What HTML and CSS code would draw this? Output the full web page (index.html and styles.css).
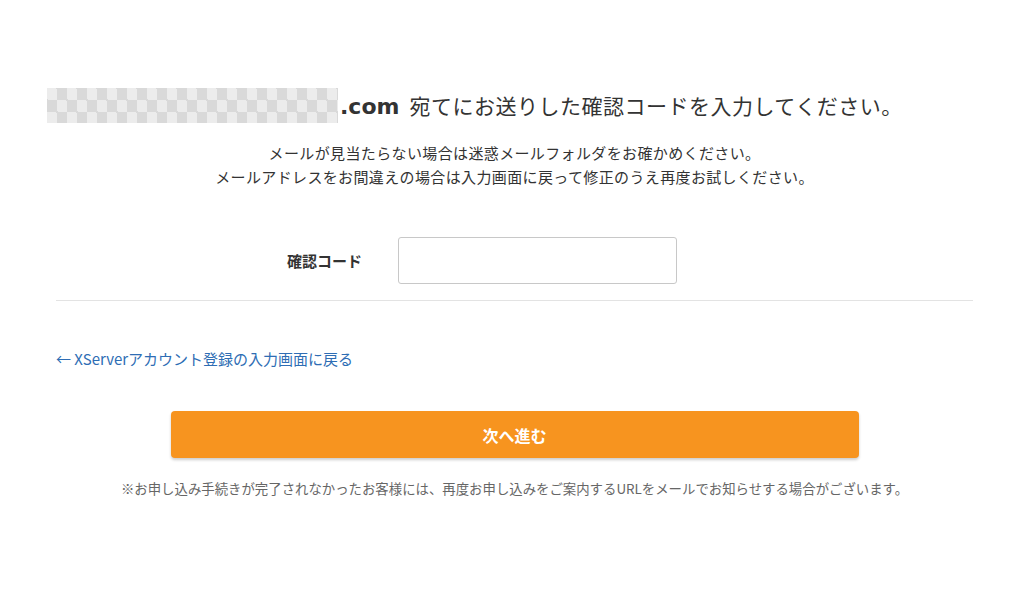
FILE: index.html
```html
<!DOCTYPE html>
<html lang="ja">
<head>
  <meta charset="UTF-8">
  <title>確認コードの入力</title>
  <link rel="stylesheet" href="styles.css">
</head>
<body>

  <h1 class="title">
    <span class="masked"></span>
    <span class="title-text"><span class="domain">.com</span>宛てにお送りした確認コードを入力してください。</span>
  </h1>

  <div class="container">
    <p class="lead">
      メールが見当たらない場合は迷惑メールフォルダをお確かめください。<br>
      メールアドレスをお間違えの場合は入力画面に戻って修正のうえ再度お試しください。
    </p>

    <form id="codeForm">
      <div class="form-row">
        <label for="code">確認コード</label>
        <input type="text" id="code">
      </div>

      <a class="back-link" href="#">← XServerアカウント登録の入力画面に戻る</a>

      <button type="submit" class="next-btn">次へ進む</button>
    </form>

    <p class="note">※お申し込み手続きが完了されなかったお客様には、再度お申し込みをご案内するURLをメールでお知らせする場合がございます。</p>
  </div>

</body>
</html>
```

FILE: styles.css
```css
body {
  margin: 0;
  font-family: "Noto Sans CJK JP", "Noto Sans", sans-serif;
  color: #333;
  background: #fff;
}
.title {
  display: flex;
  align-items: center;
  margin: 88px 0 0 47px;
  height: 35px;
  font-size: 21px;
  font-weight: normal;
  letter-spacing: 0.5px;
  white-space: nowrap;
}
.title-text {
  line-height: 35px;
}
.masked {
  display: inline-block;
  width: 291px;
  height: 35px;
  background-color: #ececec;
  background-image:
    linear-gradient(45deg, #d9d9d9 25%, transparent 25%, transparent 75%, #d9d9d9 75%),
    linear-gradient(45deg, #d9d9d9 25%, transparent 25%, transparent 75%, #d9d9d9 75%);
  background-size: 20px 24px;
  background-position: 0 0, 10px 12px;
}
.domain {
  font-family: "DejaVu Sans", sans-serif;
  font-size: 22px;
  font-weight: bold;
  letter-spacing: 0;
  margin: 0 10px 0 2px;
}
.container {
  width: 917px;
  margin-left: 56px;
}
.lead {
  margin: 18px 0 0;
  text-align: center;
  font-size: 15px;
  letter-spacing: 0.37px;
  line-height: 24px;
}
.form-row {
  display: flex;
  align-items: center;
  gap: 36px;
  margin-top: 48px;
  padding: 0 0 16px 231px;
  border-bottom: 1px solid #e3e3e3;
}
.form-row label {
  font-size: 15px;
  font-weight: bold;
}
.form-row input {
  width: 279px;
  height: 47px;
  box-sizing: border-box;
  border: 1px solid #c8c8c8;
  border-radius: 3px;
}
.back-link {
  display: block;
  margin-top: 46px;
  font-size: 15px;
  line-height: 24px;
  color: #2e6db4;
  text-decoration: none;
}
.next-btn {
  display: block;
  width: 688px;
  height: 47px;
  margin: 40px auto 0;
  border: none;
  border-radius: 4px;
  background: #f7941f;
  color: #fff;
  font-family: inherit;
  font-size: 16px;
  font-weight: bold;
  box-shadow: 0 2px 3px rgba(0, 0, 0, 0.2);
}
.note {
  margin: 20px 0 0;
  text-align: center;
  font-size: 13.4px;
  line-height: 20px;
  color: #666;
}
```
